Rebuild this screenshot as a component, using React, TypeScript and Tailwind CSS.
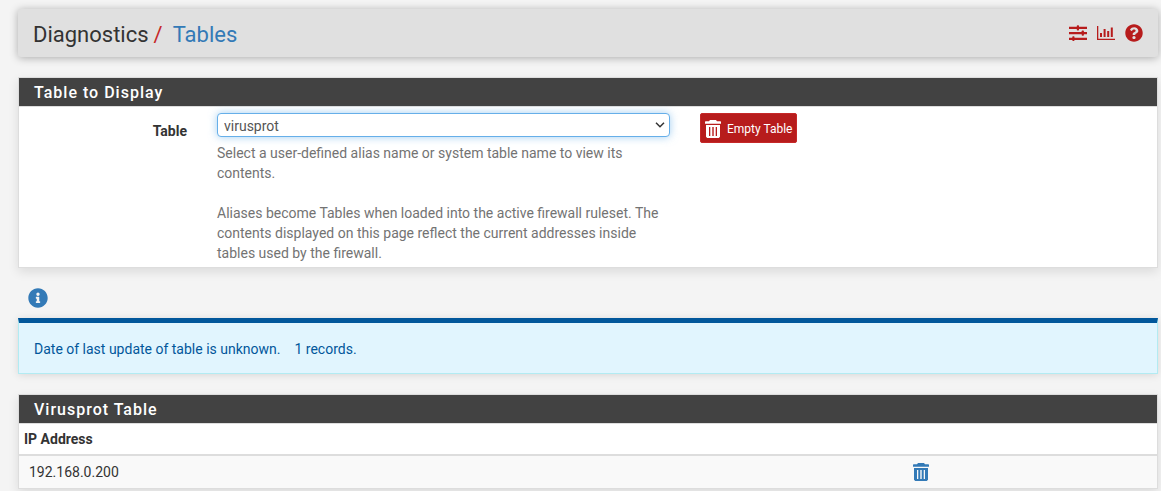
import React from "react";
import { FaInfoCircle, FaQuestionCircle } from "react-icons/fa";

function SlidersIcon() {
  return (
    <svg viewBox="0 0 18 16" className="h-4 w-[18px]" fill="currentColor" aria-hidden="true">
      <path d="M0 1.8h18v2.2H0zM0 7h18v2.2H0zM0 12.8h18V15H0z" />
      <rect x="7.8" y="0.2" width="2.2" height="5.2" rx="0.7" />
      <rect x="12.7" y="5.5" width="2.2" height="5.2" rx="0.7" />
      <rect x="3.3" y="11.2" width="2.2" height="4.8" rx="0.7" />
    </svg>
  );
}

function ChartIcon() {
  return (
    <svg viewBox="0 0 18 16" className="h-4 w-[18px]" fill="currentColor" aria-hidden="true">
      <path d="M0 1h1.3v12.8H18V15H0z" />
      <path d="M3 8h2v4H3zM6.6 4h2v8h-2zM10.2 6h2v6h-2zM13.8 2.5h2V12h-2z" />
    </svg>
  );
}

function TrashIcon() {
  return (
    <svg viewBox="0 0 16 18" className="h-[18px] w-4" fill="currentColor" aria-hidden="true">
      <path d="M5 0h6l1 1.2h3.4l.6.6V3.8H0V1.8l.6-.6H4z" />
      <path
        fillRule="evenodd"
        d="M1 5h14v11.8L13.8 18H2.2L1 16.8zM4 7v9h1.3V7zM7.3 7v9h1.4V7zM10.7 7v9H12V7z"
      />
    </svg>
  );
}

function ChevronIcon() {
  return (
    <svg
      viewBox="0 0 10 6"
      className="pointer-events-none absolute top-[9px] right-[5px] h-[6px] w-[10px]"
      fill="none"
      stroke="#333333"
      strokeWidth="1.5"
      aria-hidden="true"
    >
      <path d="M1 0.8 5 4.8 9 0.8" />
    </svg>
  );
}

function Panel({ title, children }: { title: string; children: React.ReactNode }) {
  return (
    <section className="border border-[#dddddd] bg-white shadow-[0_4px_10px_rgba(0,0,0,0.1)]">
      <h2 className="border-b border-[#dddddd] bg-[#424242] px-[15px] pt-[2px] text-base leading-[26px] font-medium tracking-[1px] text-white">
        {title}
      </h2>
      {children}
    </section>
  );
}

export default function App() {
  return (
    <div className="min-h-screen bg-[#f4f4f4] pt-[9px] pr-[3px] pl-[18px] font-[Roboto,sans-serif] text-sm leading-5 text-[#333333]">
      <header className="mb-5 flex h-12 items-center justify-between rounded-[3px] bg-[#e0e0e0] px-[15px] shadow-[0_1px_8px_rgba(0,0,0,0.3)]">
        <h1 className="flex pt-1 text-[22px] leading-6">
          Diagnostics<span className="ml-[5px] text-[#c62828]">/</span>
          <a href="#tables" className="ml-[10px] text-[#337ab7]">Tables</a>
        </h1>
        <nav className="flex items-center gap-[10px] text-[#b71c1c]">
          <a href="#settings" aria-label="Settings"><SlidersIcon /></a>
          <a href="#status" aria-label="Status"><ChartIcon /></a>
          <a href="#help" aria-label="Help"><FaQuestionCircle size={18} /></a>
        </nav>
      </header>

      <Panel title="Table to Display">
        <div className="grid grid-cols-[183fr_483fr_472fr] pt-[6px] pb-1">
          <label htmlFor="table" className="px-[15px] pt-2 text-right font-bold">Table</label>
          <div className="px-[15px]">
            <div className="relative">
              <select
                id="table"
                aria-describedby="table-help"
                className="block h-6 w-full appearance-none rounded-[4px] border border-[#66afe9] bg-white px-[6px] pt-[2px] text-sm text-[#555555] shadow-[0_0_8px_rgba(102,175,233,0.6)] outline-none"
              >
                <option>virusprot</option>
              </select>
              <ChevronIcon />
            </div>
            <div id="table-help" className="mt-[6px] text-[#737373]">
              <p>Select a user-defined alias name or system table name to view its contents.</p>
              <p className="mt-5">
                Aliases become Tables when loaded into the active firewall ruleset. The contents displayed on this page
                reflect the current addresses inside tables used by the firewall.
              </p>
            </div>
          </div>
          <div className="px-[15px]">
            <button
              type="button"
              className="flex h-[30px] items-center gap-[6px] rounded-[2px] border border-[#c62828] bg-[#b71c1c] px-1 pt-px text-xs text-white"
            >
              <TrashIcon />
              Empty Table
            </button>
          </div>
        </div>
      </Panel>

      <button type="button" aria-label="Information" className="mt-5 mb-[10px] ml-[10px] block text-[#337ab7]">
        <FaInfoCircle size={20} />
      </button>

      <div
        role="status"
        className="mb-5 border border-t-[5px] border-[#b2ebf2] border-t-[#01579b] bg-[#e1f5fe] px-[15px] pt-4 pb-[14px] text-[#01579b] shadow-[0_1px_8px_rgba(0,0,0,0.12)]"
      >
        Date of last update of table is unknown.<span className="ml-[14px]">1 records.</span>
      </div>

      <Panel title="Virusprot Table">
        <table className="w-full table-fixed text-left">
          <thead>
            <tr className="border-b-2 border-[#dddddd]">
              <th scope="col" className="w-[78%] px-[5px] py-[5px] font-bold">IP Address</th>
              <th scope="col" aria-label="Actions" />
            </tr>
          </thead>
          <tbody>
            <tr className="bg-[#f9f9f9]">
              <td className="px-[10px] py-[6px]">192.168.0.200</td>
              <td className="px-[6px]">
                <button type="button" aria-label="Delete 192.168.0.200" className="block text-[#337ab7]">
                  <TrashIcon />
                </button>
              </td>
            </tr>
          </tbody>
        </table>
      </Panel>
    </div>
  );
}
